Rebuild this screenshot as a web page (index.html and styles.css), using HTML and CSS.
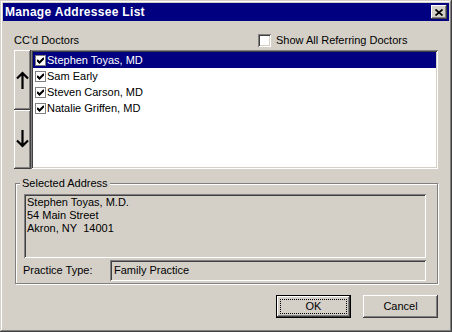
FILE: index.html
```html
<!DOCTYPE html>
<html lang="en">
<head>
  <meta charset="utf-8">
  <title>Manage Addressee List</title>
  <link rel="stylesheet" href="styles.css">
</head>
<body>
  <div class="window">
    <!-- Title bar -->
    <div class="titlebar">
      <span class="title">Manage Addressee List</span>
      <button class="close-btn" type="button" aria-label="Close">
        <svg width="8" height="7" viewBox="0 0 8 7"><path d="M0.5 0.5 L7.5 6.5 M7.5 0.5 L0.5 6.5" stroke="#000" stroke-width="1.7" fill="none"/></svg>
      </button>
    </div>

    <div class="content">
      <div class="top-row">
        <span class="cc-label">CC'd Doctors</span>
        <label class="check-label"><span class="checkbox"></span>Show All Referring Doctors</label>
      </div>

      <!-- Doctor list with move buttons -->
      <div class="list-area">
        <div class="arrows">
          <button class="arrow-btn" type="button" aria-label="Move up">
            <svg width="13" height="18" viewBox="0 0 13 18"><path d="M6.5 2 V18 M1 7.5 L6.5 2 L12 7.5" stroke="#000" stroke-width="2.2" fill="none"/></svg>
          </button>
          <button class="arrow-btn" type="button" aria-label="Move down">
            <svg width="13" height="18" viewBox="0 0 13 18"><path d="M6.5 0 V16 M1 10.5 L6.5 16 L12 10.5" stroke="#000" stroke-width="2.2" fill="none"/></svg>
          </button>
        </div>
        <ul class="listbox">
          <li class="item selected"><span class="tick"><svg width="7" height="7" viewBox="0 0 7 7"><path d="M0 3 L2.5 5.5 L7 1" stroke="#000" stroke-width="2.1" fill="none"/></svg></span>Stephen Toyas, MD</li>
          <li class="item"><span class="tick"><svg width="7" height="7" viewBox="0 0 7 7"><path d="M0 3 L2.5 5.5 L7 1" stroke="#000" stroke-width="2.1" fill="none"/></svg></span>Sam Early</li>
          <li class="item"><span class="tick"><svg width="7" height="7" viewBox="0 0 7 7"><path d="M0 3 L2.5 5.5 L7 1" stroke="#000" stroke-width="2.1" fill="none"/></svg></span>Steven Carson, MD</li>
          <li class="item"><span class="tick"><svg width="7" height="7" viewBox="0 0 7 7"><path d="M0 3 L2.5 5.5 L7 1" stroke="#000" stroke-width="2.1" fill="none"/></svg></span>Natalie Griffen, MD</li>
        </ul>
      </div>

      <!-- Selected address -->
      <fieldset class="group">
        <legend>Selected Address</legend>
        <div class="address">Stephen Toyas, M.D.<br>54 Main Street<br>Akron, NY&nbsp; 14001</div>
        <div class="practice-row">
          <span class="practice-label">Practice Type:</span>
          <div class="practice-field">Family Practice</div>
        </div>
      </fieldset>

      <div class="buttons">
        <button class="btn btn-default" type="button">OK</button>
        <button class="btn" type="button">Cancel</button>
      </div>
    </div>
  </div>
</body>
</html>
```

FILE: styles.css
```css
:root {
  --face: #d4d0c8;
  --shadow: #808080;
  --dark: #404040;
  --navy: #000080;
  --raised: inset -1px -1px #404040, inset 1px 1px #fff, inset -2px -2px #808080, inset 2px 2px #d4d0c8;
  --sunken: inset 1px 1px #808080, inset -1px -1px #fff, inset 2px 2px #404040, inset -2px -2px #d4d0c8;
}
*, *::before, *::after { box-sizing: border-box; }
body { margin: 0; background: var(--face); font: 11px/13px "Liberation Sans", Arial, sans-serif; color: #000; }
button { font: inherit; color: #000; border: 0; padding: 0; background: var(--face); }

.window { width: 452px; height: 332px; padding: 3px; background: var(--face); display: flex; flex-direction: column;
  box-shadow: inset -1px -1px #404040, inset 1px 1px #d4d0c8, inset -2px -2px #808080, inset 2px 2px #fff; }
.titlebar { height: 18px; flex: none; background: var(--navy); color: #fff;
  display: flex; align-items: center; justify-content: space-between; padding: 0 2px; }
.title { font-size: 12px; font-weight: bold; letter-spacing: 0.3px; }
.close-btn { width: 16px; height: 14px; box-shadow: var(--raised); display: flex; align-items: center; justify-content: center; }

.content { padding: 13px 11px 0; display: flex; flex-direction: column; }
.top-row { display: flex; align-items: center; height: 13px; margin-bottom: 3px; }
.cc-label { width: 244px; }
.check-label { display: flex; align-items: center; gap: 5px; }
.checkbox { width: 13px; height: 13px; background: #fff; box-shadow: var(--sunken); }

.list-area { display: flex; height: 119px; }
.arrows { width: 17px; display: flex; flex-direction: column; }
.arrow-btn { flex: 1; box-shadow: var(--raised); display: flex; align-items: center; justify-content: center; }
.listbox { flex: 1; margin: 0; padding: 2px; list-style: none; background: #fff; box-shadow: var(--sunken); }
.item { height: 16px; display: flex; align-items: center; gap: 1px; padding-left: 2px; white-space: nowrap; }
.item.selected { background: var(--navy); color: #fff; }
.tick { width: 11px; height: 11px; border: 1px solid var(--shadow); background: #fff; display: flex; align-items: center; justify-content: center; }

.group { margin: 8px 0 0 1px; padding: 0 11px 2px 8px; border: 1px solid var(--shadow); box-shadow: inset 1px 1px #fff, 1px 1px #fff; }
.group legend { padding: 0 2px; margin-left: -4px; line-height: 13px; background: var(--face); }
.address { margin-top: 4px; height: 64px; padding: 2px 3px 0; box-shadow: var(--sunken); }
.practice-row { display: flex; align-items: center; margin-top: 2px; height: 21px; }
.practice-label { width: 87px; margin-left: -1px; }
.practice-field { flex: 1; height: 21px; padding: 0 4px; display: flex; align-items: center; box-shadow: var(--sunken); }

.buttons { display: flex; justify-content: flex-end; gap: 12px; margin-top: 11px; }
.btn { width: 75px; height: 23px; box-shadow: var(--raised); }
.btn-default { box-shadow: inset 0 0 0 1px #000, inset -2px -2px #404040, inset 2px 2px #fff, inset -3px -3px #808080;
  outline: 1px dotted #000; outline-offset: -5px; }
```
